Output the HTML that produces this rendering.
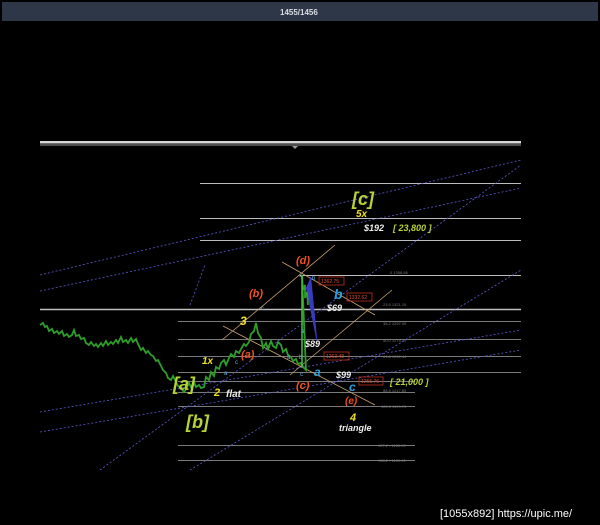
<!DOCTYPE html>
<html><head><meta charset="utf-8"><style>
html,body{margin:0;padding:0;background:#000;width:600px;height:525px;overflow:hidden}
svg{display:block}
text{font-family:"Liberation Sans",sans-serif}
.lb{font-family:"Liberation Serif",serif;font-style:italic;font-weight:bold}
</style></head><body>
<svg width="600" height="525" viewBox="0 0 600 525" xmlns="http://www.w3.org/2000/svg">
<rect width="600" height="525" fill="#000"/>
<rect x="2" y="2" width="596" height="19" fill="#2e3748"/>
<text x="280" y="15" font-size="8" font-weight="bold" fill="#d8dce4">1455/1456</text>
<rect x="40" y="141" width="481" height="2.5" fill="#d8d8d8"/>
<rect x="40" y="144.5" width="481" height="1" fill="#9a9a9a"/>
<path d="M292 146 l3 3 l3 -3z" fill="#999"/>
<g stroke="#bdbdbd" stroke-width="1">
<line x1="200" y1="183.5" x2="521" y2="183.5"/>
<line x1="200" y1="218.5" x2="521" y2="218.5"/>
<line x1="200" y1="240.5" x2="521" y2="240.5"/>
<line x1="300" y1="275.5" x2="521" y2="275.5"/>
<line x1="40" y1="309.5" x2="521" y2="309.5" stroke-width="1.5"/>
</g>
<g stroke="#7a7a7a" stroke-width="1">
<line x1="178" y1="321.5" x2="521" y2="321.5"/>
<line x1="178" y1="339.5" x2="521" y2="339.5"/>
<line x1="178" y1="356.5" x2="521" y2="356.5"/>
<line x1="178" y1="372.5" x2="521" y2="372.5"/>
<line x1="178" y1="381.5" x2="415" y2="381.5"/>
<line x1="178" y1="392.5" x2="415" y2="392.5"/>
<line x1="178" y1="406.5" x2="415" y2="406.5"/>
<line x1="178" y1="445.5" x2="415" y2="445.5"/>
<line x1="178" y1="460.5" x2="415" y2="460.5"/>
</g>
<g font-size="4" fill="#777">
<text x="390" y="274">0 1358.66</text><text x="383" y="306">23.6 1321.15</text>
<text x="383" y="325">38.2 1297.95</text><text x="383" y="342">50.0 1279.19</text>
<text x="383" y="358">61.8 1260.44</text><text x="383" y="392">88.6 1217.85</text>
<text x="381" y="408">100.0 1199.73</text><text x="378" y="447">127.2 - 1156.50</text>
<text x="378" y="462">138.2 - 1139.02</text>
</g>
<g stroke="#5a5ad0" stroke-width="0.8" stroke-dasharray="2,2" fill="none">
<line x1="40" y1="275" x2="521" y2="160"/>
<line x1="40" y1="291" x2="521" y2="188"/>
<line x1="40" y1="412" x2="521" y2="330"/>
<line x1="40" y1="432" x2="521" y2="350"/>
<line x1="100" y1="470" x2="521" y2="165"/>
<line x1="190" y1="470" x2="521" y2="270"/>
<line x1="190" y1="305" x2="205" y2="265"/>
</g>
<g stroke="#c8a070" stroke-width="0.8" fill="none">
<line x1="222" y1="340" x2="335" y2="245"/>
<line x1="223" y1="326" x2="375" y2="405"/>
<line x1="282" y1="262" x2="375" y2="315"/>
<line x1="290" y1="375" x2="392" y2="290"/>
</g>
<path d="M306 288 L311 276 L318 348 Z" fill="#3a3ac0"/>
<path d="M40 325 l3 -2 2 4 2 -1 2 5 3 -2 2 4 3 -2 2 3 3 -3 2 5 3 -2 2 3 3 -2 2 -5 2 6 3 -1 2 4 3 -1 2 5 3 2 2 -3 3 4 2 -2 2 3 3 -4 2 3 3 -5 2 4 3 -3 2 2 3 -4 2 3 3 -6 2 5 3 -2 2 3 3 -5 2 4 3 -3 2 5 3 6 2 -2 3 5 2 -2 3 4 2 1 3 5 2 -1 3 6 2 4 3 3 2 5 3 2 2 -4 3 6 2 4 3 2 3 4 2 -3 3 -6 2 4 3 -5 2 5 3 -2 2 3 3 -1 2 -10 3 3 2 -8 3 4 2 -9 3 2 2 -6 3 -3 2 5 3 -7 2 -4 3 3 2 -6 3 2 2 -4 3 -5 2 2 3 -4 2 -8 3 -3 2 -8 2 10 3 5 2 10 3 -5 2 6 3 -8 2 5 3 2 2 -6 3 3 2 7 3 -3 2 6 3 2 2 4 3 -2 2 5 3 -1 2 4 3 3 L302 275 L303 290 305 285 305 298 307 292 308 305" fill="none" stroke="#2e9e2a" stroke-width="1.8"/>
<line x1="302" y1="275" x2="302" y2="367" stroke="#45c040" stroke-width="1.5"/>
<g class="lb">
<text x="352" y="205" font-size="18" fill="#b5d334">[c]</text>
<text x="356" y="217" font-size="10" fill="#f0e020">5x</text>
<text x="364" y="231" font-size="9" fill="#eee">$192</text>
<text x="393" y="231" font-size="9" fill="#b5d334">[ 23,800 ]</text>
<text x="296" y="264" font-size="11" fill="#f05020">(d)</text>
<text x="249" y="297" font-size="11" fill="#f05020">(b)</text>
<text x="240" y="325" font-size="12" fill="#f0e020">3</text>
<text x="334" y="299" font-size="14" fill="#2aa0e0">b</text>
<text x="327" y="311" font-size="9" fill="#eee">$69</text>
<text x="305" y="347" font-size="9" fill="#eee">$89</text>
<text x="241" y="358" font-size="11" fill="#f05020">(a)</text>
<text x="202" y="364" font-size="10" fill="#f0e020">1x</text>
<text x="173" y="390" font-size="18" fill="#b5d334">[a]</text>
<text x="214" y="396" font-size="11" fill="#f0e020">2</text>
<text x="226" y="397" font-size="10" fill="#eee">flat</text>
<text x="296" y="389" font-size="11" fill="#f05020">(c)</text>
<text x="314" y="376" font-size="12" fill="#2aa0e0">a</text>
<text x="336" y="378" font-size="9" fill="#eee">$99</text>
<text x="390" y="385" font-size="9" fill="#b5d334">[ 21,000 ]</text>
<text x="349" y="391" font-size="12" fill="#2aa0e0">c</text>
<text x="345" y="404" font-size="10" fill="#f05020">(e)</text>
<text x="350" y="421" font-size="11" fill="#f0e020">4</text>
<text x="339" y="431" font-size="9" fill="#eee">triangle</text>
<text x="186" y="428" font-size="18" fill="#b5d334">[b]</text>
</g>
<g font-size="5" fill="#e05030">
<rect x="319" y="277" width="25" height="8" fill="none" stroke="#c03020" stroke-width="0.8"/><text x="321" y="283">1362.75</text>
<rect x="347" y="293" width="25" height="8" fill="none" stroke="#c03020" stroke-width="0.8"/><text x="349" y="299">1332.62</text>
<rect x="324" y="352" width="25" height="8" fill="none" stroke="#c03020" stroke-width="0.8"/><text x="326" y="358">1263.48</text>
<rect x="359" y="377" width="24" height="8" fill="none" stroke="#c03020" stroke-width="0.8"/><text x="361" y="383">1255.76</text>
</g>
<g font-size="6" fill="#5ab0e0">
<text x="299" y="277">c</text><text x="312" y="280">b</text><text x="261" y="310">c</text>
<text x="301" y="333">a</text><text x="299" y="359">b</text><text x="300" y="376">c</text>
<text x="224" y="375">a</text><text x="235" y="364">c</text><text x="287" y="359">a</text>
</g>
<text x="440" y="517" font-size="11" fill="#fff" font-family="Liberation Sans,sans-serif">[1055x892] https://upic.me/</text>
</svg>
</body></html>
